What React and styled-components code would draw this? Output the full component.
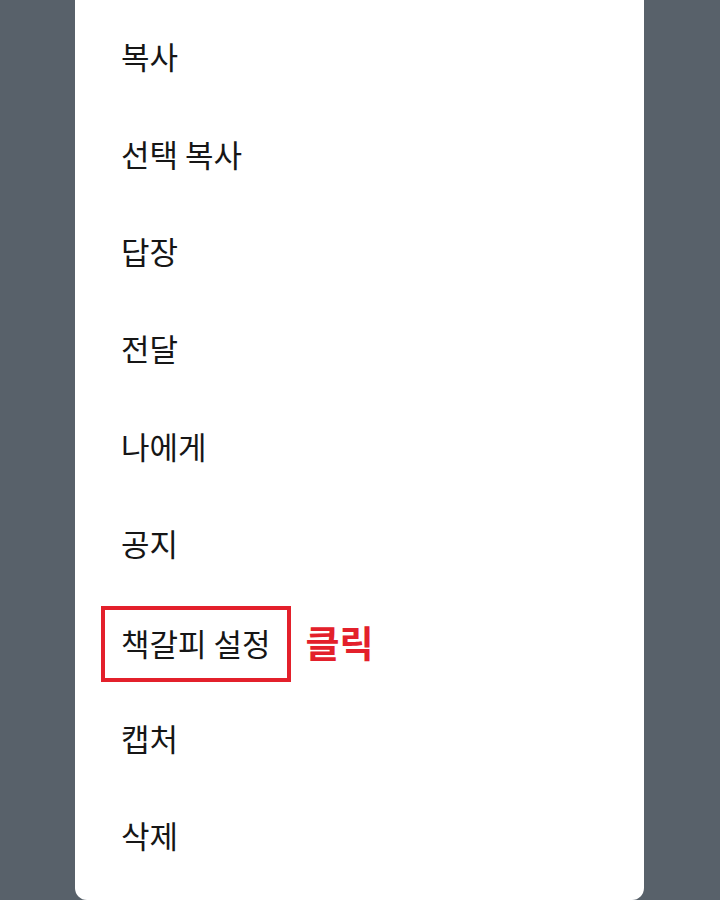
import React from "react";
import styled, { createGlobalStyle } from "styled-components";

const Global = createGlobalStyle`
  html, body {
    margin: 0;
    padding: 0;
    background: #58616a;
  }
  body {
    font-family: "Noto Sans CJK KR", "Noto Sans", sans-serif;
  }
`;

const Screen = styled.div`
  width: 720px;
  height: 900px;
  overflow: hidden;
  background: #58616a;
`;

const Sheet = styled.div`
  margin-left: 75px;
  width: 569px;
  height: 900px;
  box-sizing: border-box;
  background: #ffffff;
  border-radius: 0 0 12px 12px;
  padding-top: 7.5px;
  display: flex;
  flex-direction: column;
`;

const Row = styled.div`
  height: 97.33px;
  display: flex;
  align-items: center;
  gap: 15px;
  padding-left: 46px;
  flex-shrink: 0;
`;

const Label = styled.span`
  font-size: 31px;
  line-height: 1.4;
  color: #161616;
  white-space: pre;
`;

const Highlight = styled.span`
  display: inline-flex;
  align-items: center;
  margin-left: -20px;
  margin-top: 8px;
  padding: 11px 16px 13px 16px;
  border: 4px solid #e3202b;
`;

const Hint = styled.span`
  font-size: 37px;
  font-weight: 700;
  line-height: 1.4;
  color: #e3202b;
  margin-top: 6px;
`;

const items = [
  "복사",
  "선택 복사",
  "답장",
  "전달",
  "나에게",
  "공지",
  "책갈피 설정",
  "캡처",
  "삭제",
];

export default function App() {
  return (
    <>
      <Global />
      <Screen>
        <Sheet>
          {items.map((text) =>
            text === "책갈피 설정" ? (
              <Row key={text}>
                <Highlight>
                  <Label>{text}</Label>
                </Highlight>
                <Hint>클릭</Hint>
              </Row>
            ) : (
              <Row key={text}>
                <Label>{text}</Label>
              </Row>
            )
          )}
        </Sheet>
      </Screen>
    </>
  );
}
